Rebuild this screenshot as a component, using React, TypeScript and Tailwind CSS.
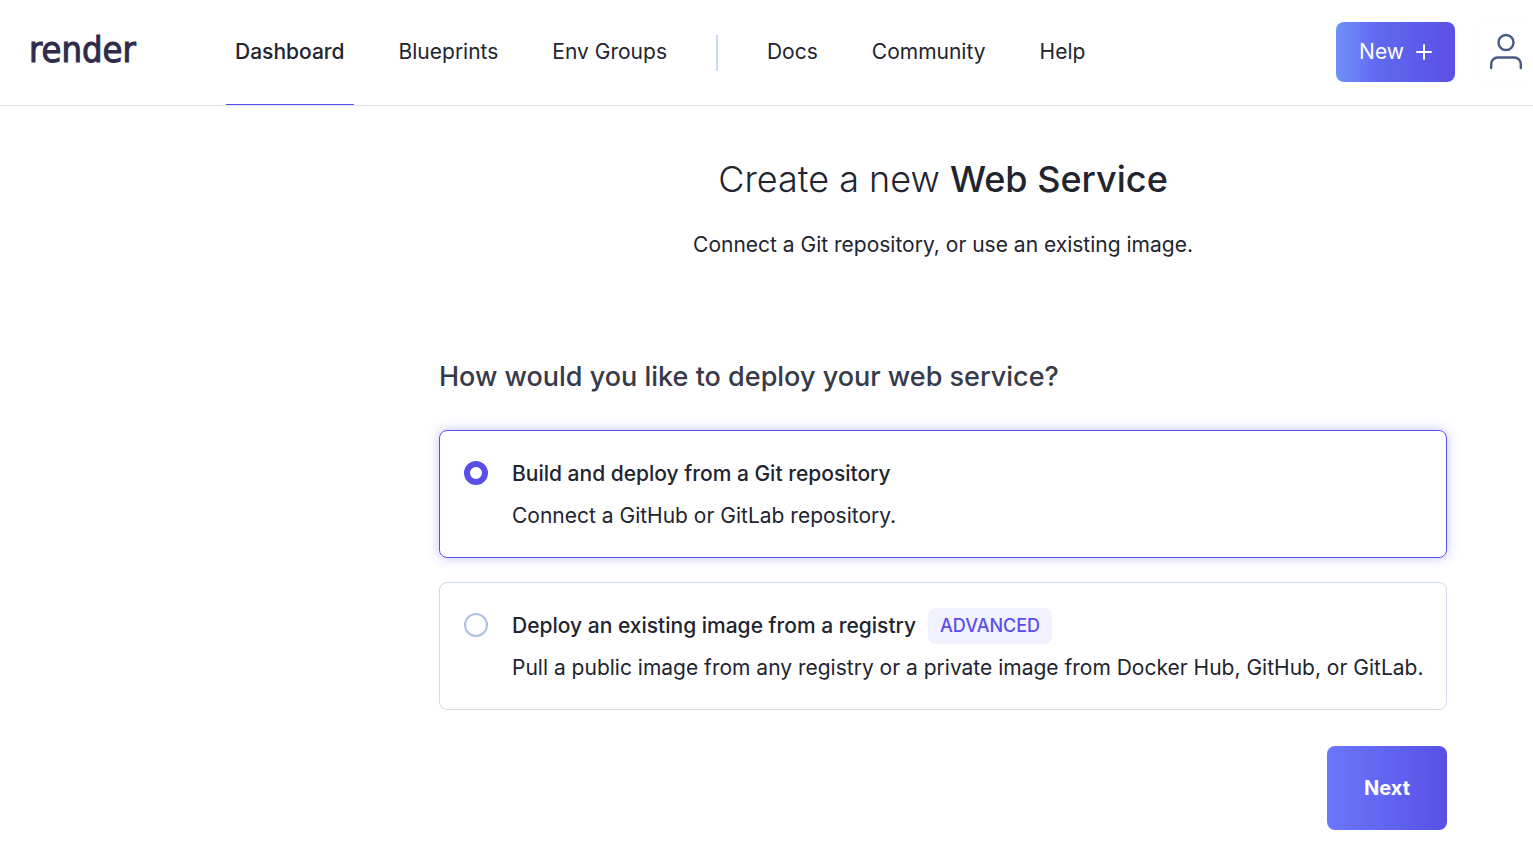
import { useState } from "react";

type Option = { id: string; title: string; text: string; badge?: string };

const options: Option[] = [
  {
    id: "git",
    title: "Build and deploy from a Git repository",
    text: "Connect a GitHub or GitLab repository.",
  },
  {
    id: "image",
    title: "Deploy an existing image from a registry",
    text: "Pull a public image from any registry or a private image from Docker Hub, GitHub, or GitLab.",
    badge: "ADVANCED",
  },
];

function NavLink({ label, active = false }: { label: string; active?: boolean }) {
  return (
    <a
      href="#"
      aria-current={active ? "page" : undefined}
      className={
        active
          ? "flex items-center border-b border-[#594fe8] px-[9px] font-medium"
          : "flex items-center border-b border-transparent px-[9px]"
      }
    >
      {label}
    </a>
  );
}

function Header() {
  return (
    <header className="flex h-[106px] overflow-hidden border-b border-[#dfe7ec] text-[21px] leading-6 whitespace-nowrap">
      <a
        href="#"
        className="flex w-[226px] shrink-0 items-center pb-1.5 pl-[29px] font-['DejaVu_Sans_Condensed','DejaVu_Sans',sans-serif] text-[36px] leading-10 text-[#2f2b4a] [-webkit-text-stroke:1px_#2f2b4a]"
      >
        render
      </a>
      <nav className="flex gap-9">
        <NavLink label="Dashboard" active />
        <NavLink label="Blueprints" />
        <NavLink label="Env Groups" />
        <span className="mx-1 h-9 w-0.5 self-center bg-[#ccd9ec]" />
        <NavLink label="Docs" />
        <NavLink label="Community" />
        <NavLink label="Help" />
      </nav>
      <div className="-mr-[3px] ml-auto flex items-center gap-[21px] pb-px">
        <button
          type="button"
          className="flex h-[60px] w-[119px] items-center justify-center gap-3 rounded-lg bg-linear-to-r from-[#7090fa] via-[#6068f0] via-35% to-[#5a50e5] text-white"
        >
          New
          <svg width="16" height="16" viewBox="0 0 16 16" fill="none" stroke="currentColor" strokeWidth="2" strokeLinecap="round" aria-hidden="true">
            <path d="M8 1v14M1 8h14" />
          </svg>
        </button>
        <button
          type="button"
          aria-label="Account"
          className="flex size-[60px] items-center justify-center rounded-lg border border-[#f8fefc]"
        >
          <svg width="34" height="38" viewBox="0 0 34 38" fill="none" stroke="#475b80" strokeWidth="2.4" strokeLinecap="round" aria-hidden="true">
            <circle cx="17" cy="9.500" r="7.500" />
            <path d="M2.200 35v-4a6.500 6.500 0 0 1 6.500-6.500h16.600a6.500 6.500 0 0 1 6.500 6.500v4" />
          </svg>
        </button>
      </div>
    </header>
  );
}

export default function App() {
  const [selected, setSelected] = useState("git");

  return (
    <div className="min-h-screen bg-white font-['Inter',sans-serif] text-[#222430]">
      <Header />
      <main className="pt-[49px] pr-[86px] pl-[439px] text-[21px] leading-6">
        <h1 className="text-center text-[36px] leading-[48px] font-light">
          Create a new <strong className="font-medium">Web Service</strong>
        </h1>
        <p className="mt-[30px] text-center">Connect a Git repository, or use an existing image.</p>

        <form className="mt-[104px]" onSubmit={(e) => e.preventDefault()}>
          <fieldset>
            <legend className="text-[27px] leading-8 font-medium text-[#373a49]">
              How would you like to deploy your web service?
            </legend>
            <div className="mt-[37px] flex flex-col gap-6">
              {options.map((option) => (
                <label
                  key={option.id}
                  htmlFor={option.id}
                  className={
                    selected === option.id
                      ? "flex gap-6 rounded-lg border border-[#594fe8] pt-[25px] pr-3 pb-[29px] pl-6 shadow-[0_0_12px_rgba(89,79,232,0.35)]"
                      : "flex gap-6 rounded-lg border border-[#cfdbeb] pt-[25px] pr-3 pb-[29px] pl-6"
                  }
                >
                  <input
                    id={option.id}
                    type="radio"
                    name="source"
                    checked={selected === option.id}
                    onChange={() => setSelected(option.id)}
                    className="mt-[5px] size-6 shrink-0 appearance-none rounded-full border-2 border-[#b0c0e2] checked:border-6 checked:border-[#594fe8]"
                  />
                  <span className="flex flex-col gap-3">
                    <span className="flex h-9 items-center gap-3 font-medium">
                      {option.title}
                      {option.badge && (
                        <span className="flex h-9 items-center rounded-lg bg-[#f2f1fe] px-3 text-[18px] text-[#594fe8]">
                          {option.badge}
                        </span>
                      )}
                    </span>
                    <span>{option.text}</span>
                  </span>
                </label>
              ))}
            </div>
          </fieldset>
          <button
            type="submit"
            className="mt-9 ml-auto flex h-[84px] w-[120px] items-center justify-center rounded-lg bg-linear-to-r from-[#6b77fd] to-[#5950e4] text-[20px] font-bold text-white"
          >
            Next
          </button>
        </form>
      </main>
    </div>
  );
}
